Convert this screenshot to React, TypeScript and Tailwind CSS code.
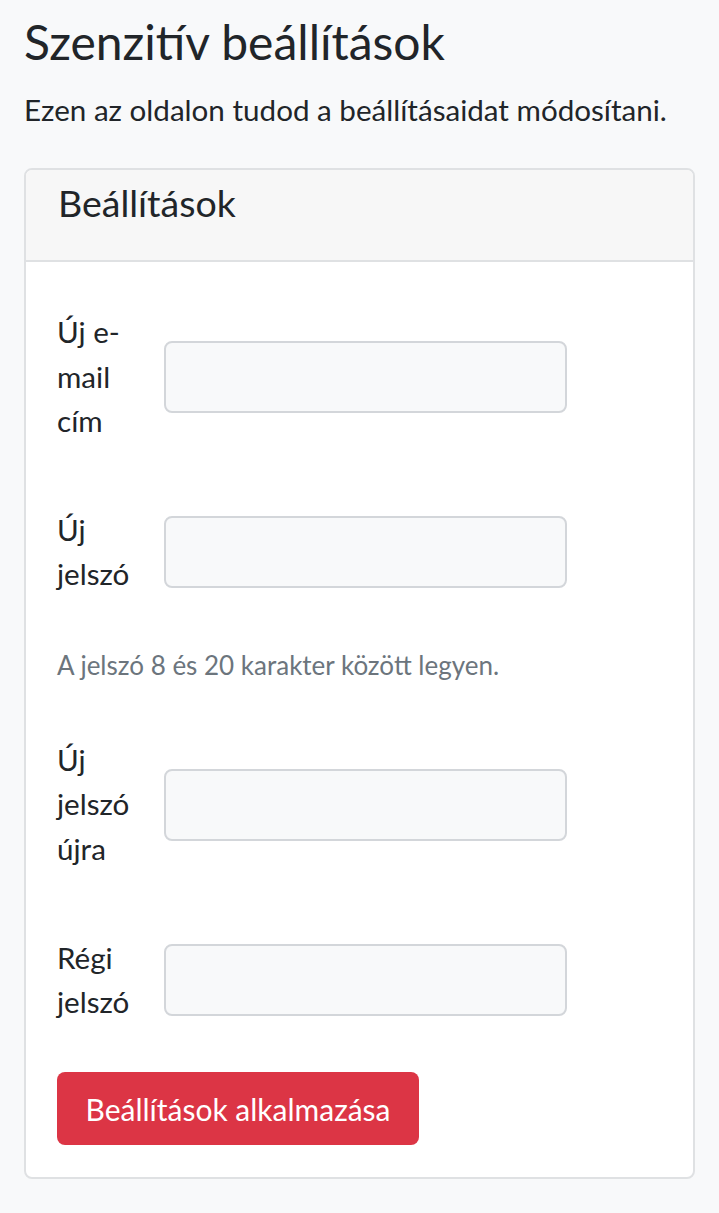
import React from "react";

const font = { fontFamily: "Lato, 'Noto Sans', sans-serif" };

function Row({ lines, className = "" }: { lines: string[]; className?: string }) {
  return (
    <div className={"flex items-center " + className}>
      <div className="w-[107px] shrink-0 text-[29.6px] leading-[44.5px] text-[#212529]">
        {lines.map((l, i) => (
          <div key={i}>{l}</div>
        ))}
      </div>
      <input
        type="text"
        className="w-[403px] h-[72px] rounded-[8px] border-2 border-[#d3d6da] bg-[#f8f9fa] outline-none"
      />
    </div>
  );
}

export default function App() {
  return (
    <div className="min-h-[1213px] w-[719px] bg-[#f8f9fa] text-[#212529]" style={font}>
      <div className="px-[24px] pt-[14px]">
        <h1 className="text-[48px] leading-[56px] font-normal">Szenzitív beállítások</h1>
        <p className="mt-[18px] text-[29.6px] leading-[44px]">Ezen az oldalon tudod a beállításaidat módosítani.</p>
        <div className="mt-[36px] w-[671px] rounded-[8px] border-2 border-[#dfe1e3] bg-white overflow-hidden">
          <div className="h-[92px] border-b-2 border-[#dfe1e3] bg-[#f7f7f7] px-[32px] pt-[5px]">
            <div className="text-[37.5px] leading-[55px]">Beállítások</div>
          </div>
          <div className="px-[31px] pt-[48px] pb-[32px]">
            <Row lines={["Új e-", "mail", "cím"]} />
            <Row lines={["Új", "jelszó"]} className="mt-[64px]" />
            <p className="mt-[49.5px] text-[26px] leading-[39px] text-[#6c757d]">A jelszó 8 és 20 karakter között legyen.</p>
            <Row lines={["Új", "jelszó", "újra"]} className="mt-[52.75px]" />
            <Row lines={["Régi", "jelszó"]} className="mt-[64.25px]" />
            <button className="mt-[47.5px] h-[73px] w-[362px] rounded-[8px] bg-[#dc3545] text-white text-[30px] leading-[44px] block">
              Beállítások alkalmazása
            </button>
          </div>
        </div>
      </div>
    </div>
  );
}
